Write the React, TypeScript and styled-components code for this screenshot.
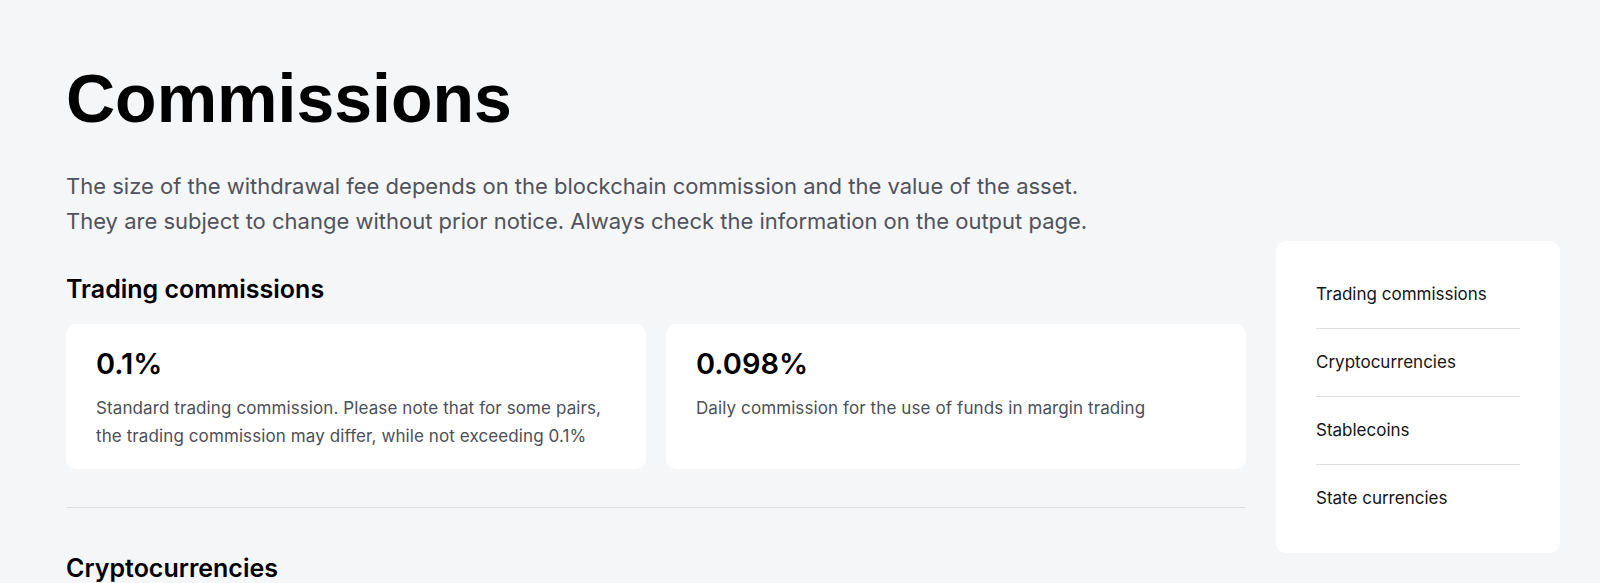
import React from 'react';
import styled, { createGlobalStyle } from 'styled-components';

const GlobalStyle = createGlobalStyle`
  html, body {
    margin: 0;
    padding: 0;
    background: #f5f6f8;
  }
  body {
    font-family: Inter, "Noto Sans", Arial, sans-serif;
    color: #111;
  }
  * {
    box-sizing: border-box;
  }
`;

const Page = styled.div`
  display: grid;
  grid-template-columns: 1180px 284px;
  column-gap: 30px;
  align-items: start;
  padding: 58px 40px 40px 66px;
`;

const Main = styled.main`
  display: flex;
  flex-direction: column;
`;

const Title = styled.h1`
  margin: 0;
  font-family: "Liberation Sans", Arial, sans-serif;
  font-weight: 700;
  font-size: 68px;
  line-height: 1.2;
  color: #000;
`;

const Lead = styled.p`
  margin: 29px 0 0;
  font-size: 22px;
  line-height: 35px;
  color: #50535b;
`;

const SectionTitle = styled.h2<{ $gap: number }>`
  margin: ${({ $gap }) => $gap}px 0 0;
  font-size: 25px;
  line-height: 30px;
  font-weight: 600;
  color: #000;
`;

const Cards = styled.div`
  display: grid;
  grid-template-columns: 1fr 1fr;
  gap: 20px;
  margin-top: 20px;
`;

const Card = styled.div`
  background: #fff;
  border-radius: 10px;
  padding: 23px 30px 19px;
`;

const Rate = styled.div`
  font-size: 29px;
  line-height: 34px;
  font-weight: 600;
  color: #000;
`;

const CardText = styled.p`
  margin: 13px 0 0;
  font-size: 17px;
  line-height: 28px;
  letter-spacing: 0.1px;
  color: #4c4f57;
`;

const Divider = styled.hr`
  margin: 38px 0 0;
  border: none;
  border-top: 1px solid #dcdde1;
`;

const Aside = styled.aside`
  margin-top: 183px;
  background: #fff;
  border-radius: 10px;
  padding: 20px 40px 21px;
`;

const NavList = styled.ul`
  list-style: none;
  margin: 0;
  padding: 0;
`;

const NavItem = styled.li`
  padding: 22px 0;
  font-size: 17px;
  line-height: 23px;
  color: #151515;
  cursor: pointer;

  & + & {
    border-top: 1px solid #dcdde1;
  }
`;

const navItems = ['Trading commissions', 'Cryptocurrencies', 'Stablecoins', 'State currencies'];

const App: React.FC = () => {
  return (
    <>
      <GlobalStyle />
      <Page>
        <Main>
          <Title>Commissions</Title>
          <Lead>
            The size of the withdrawal fee depends on the blockchain commission and the value of the asset.
            <br />
            They are subject to change without prior notice. Always check the information on the output page.
          </Lead>
          <SectionTitle $gap={35}>Trading commissions</SectionTitle>
          <Cards>
            <Card>
              <Rate>0.1%</Rate>
              <CardText>
                Standard trading commission. Please note that for some pairs,
                <br />
                the trading commission may differ, while not exceeding 0.1%
              </CardText>
            </Card>
            <Card>
              <Rate>0.098%</Rate>
              <CardText>Daily commission for the use of funds in margin trading</CardText>
            </Card>
          </Cards>
          <Divider />
          <SectionTitle $gap={45}>Cryptocurrencies</SectionTitle>
        </Main>
        <Aside>
          <NavList>
            {navItems.map((item) => (
              <NavItem key={item}>{item}</NavItem>
            ))}
          </NavList>
        </Aside>
      </Page>
    </>
  );
};

export default App;
